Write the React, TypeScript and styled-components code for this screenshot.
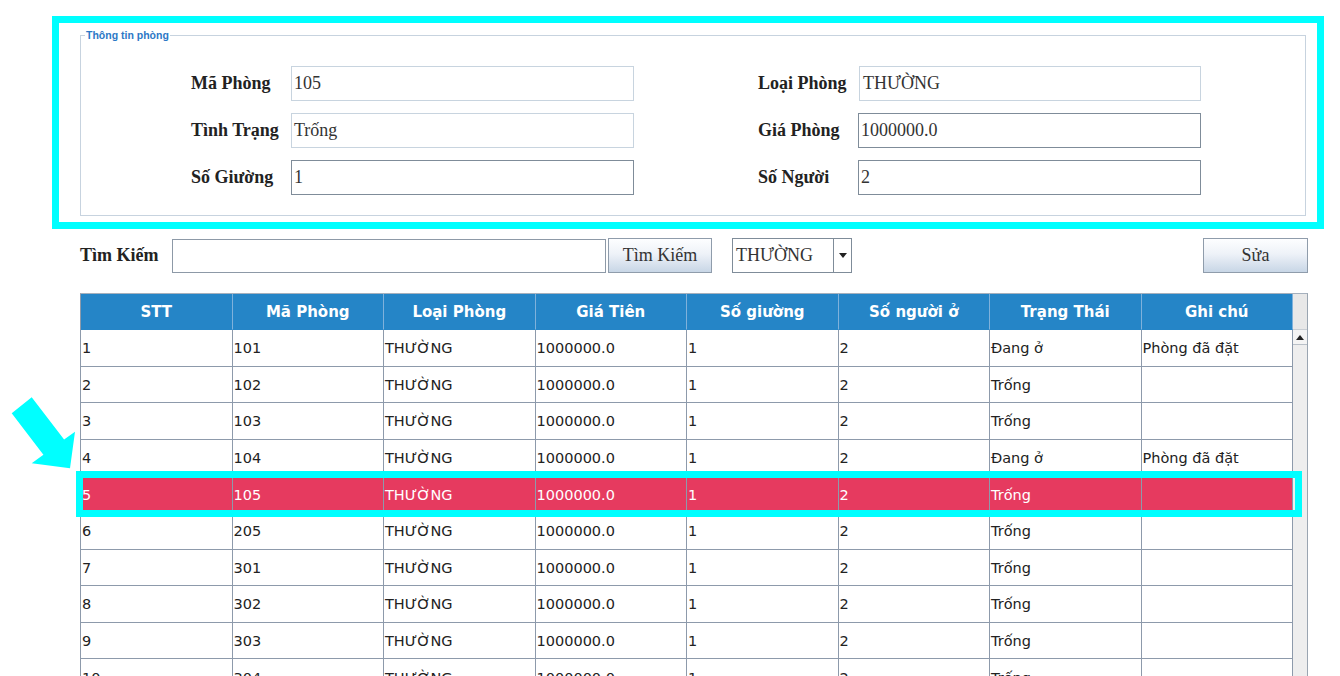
import React from "react";
import styled, { createGlobalStyle } from "styled-components";

const Global = createGlobalStyle`
  html, body { margin: 0; padding: 0; background: #ffffff; overflow: hidden; height: 676px; }
  * { box-sizing: border-box; }
`;

const Page = styled.div`
  position: relative;
  width: 1340px;
  height: 676px;
  overflow: hidden;
  padding: 16px 0 0 52px;
  font-family: "Liberation Serif", serif;
`;

const InfoFrame = styled.div`
  width: 1272px;
  height: 213px;
  border: 7px solid #00ffff;
  padding: 6px 11px 0 21px;
`;

const FieldSet = styled.fieldset`
  margin: 0;
  padding: 0 0 20px 0;
  border: 1px solid #c7d3df;
  height: 187px;
`;

const Legend = styled.legend`
  margin-left: 4px;
  padding: 0 1px;
  font-family: "Liberation Sans", Arial, sans-serif;
  font-size: 10.5px;
  line-height: 12px;
  color: #2c78c6;
  font-weight: 600;
`;

const FormGrid = styled.div`
  display: grid;
  grid-template-columns: 100px 343px 124px 100px 343px;
  grid-auto-rows: 35px;
  row-gap: 12px;
  padding: 25px 0 0 110px;
  align-items: center;
`;

const Label = styled.div`
  font-family: "Liberation Serif", serif;
  font-weight: bold;
  font-size: 18px;
  color: #222222;
  white-space: nowrap;
`;

const Field = styled.div<{ $editable?: boolean; $shift?: boolean }>`
  height: 35px;
  margin-left: ${(p) => (p.$shift ? "1px" : "0")};
  border: 1px solid ${(p) => (p.$editable ? "#7f8c99" : "#c8d4df")};
  background: #ffffff;
  font-family: "Liberation Serif", serif;
  font-size: 18px;
  color: #333333;
  display: flex;
  align-items: center;
  padding-left: ${(p) => (p.$shift ? "3px" : "2px")};
`;

const Spacer = styled.div``;

const SearchRow = styled.div`
  display: flex;
  align-items: center;
  margin: 9px 0 0 28px;
  width: 1228px;
  height: 35px;
`;

const SearchLabel = styled(Label)`
  width: 92px;
`;

const SearchInput = styled.div`
  width: 434px;
  height: 34px;
  border: 1px solid #8d99a7;
  background: #fff;
`;

const Button = styled.div<{ $w: number; $left?: number }>`
  width: ${(p) => p.$w}px;
  height: 35px;
  margin-left: ${(p) => p.$left ?? 0}px;
  border: 1px solid #8f9cab;
  background: linear-gradient(#fdfeff 0%, #eef2f8 45%, #c8d6e6 100%);
  display: flex;
  align-items: center;
  justify-content: center;
  font-family: "Liberation Serif", serif;
  font-size: 18px;
  color: #333333;
`;

const PushRight = styled.div`
  flex: 1;
`;

const Combo = styled.div`
  width: 120px;
  height: 35px;
  margin-left: 20px;
  border: 1px solid #7f8c99;
  background: #fff;
  display: flex;
`;

const ComboText = styled.div`
  flex: 1;
  display: flex;
  align-items: center;
  padding-left: 3px;
  font-family: "Liberation Serif", serif;
  font-size: 18px;
  color: #333;
`;

const ComboArrow = styled.div`
  width: 18px;
  border-left: 1px solid #7f8c99;
  display: flex;
  align-items: center;
  justify-content: center;
  &::after {
    content: "";
    border-left: 4px solid transparent;
    border-right: 4px solid transparent;
    border-top: 5px solid #222;
  }
`;

const TableWrap = styled.div`
  position: relative;
  margin: 20px 0 0 28px;
  width: 1228px;
  display: flex;
`;

const Table = styled.div`
  width: 1213px;
  border-left: 1px solid #8d9aab;
  border-top: 1px solid #a5b0bd;
`;

const Row = styled.div<{ $header?: boolean; $selected?: boolean }>`
  display: grid;
  grid-template-columns: repeat(8, 1fr);
  height: ${(p) => (p.$header ? "36px" : "36.6px")};
  background: ${(p) => (p.$header ? "#2585c7" : p.$selected ? "#e63a5f" : "#ffffff")};
`;

const Cell = styled.div<{ $header?: boolean; $selected?: boolean }>`
  border-right: 1px solid ${(p) => (p.$header ? "#7fb1db" : "#8d9aab")};
  border-bottom: 1px solid ${(p) => (p.$header ? "#2585c7" : "#8d9aab")};
  display: flex;
  align-items: center;
  justify-content: ${(p) => (p.$header ? "center" : "flex-start")};
  padding-left: ${(p) => (p.$header ? "0" : "1px")};
  padding-top: 1px;
  font-family: "DejaVu Sans", Verdana, sans-serif;
  font-size: ${(p) => (p.$header ? "15px" : "14.5px")};
  font-weight: ${(p) => (p.$header ? "bold" : "normal")};
  color: ${(p) => (p.$header || p.$selected ? "#ffffff" : "#222222")};
  white-space: nowrap;
  overflow: hidden;
`;

const ScrollBar = styled.div`
  width: 15px;
  display: flex;
  flex-direction: column;
  border-right: 1px solid #9aa5b1;
  border-top: 1px solid #a5b0bd;
  background: #eeeeee;
  height: 400px;
`;

const ScrollHead = styled.div`
  height: 36px;
  background: #e8e8e8;
  border-bottom: 1px solid #c9ced4;
`;

const ScrollUp = styled.div`
  height: 15px;
  background: #f4f4f4;
  border-bottom: 1px solid #b9c0c8;
  display: flex;
  align-items: center;
  justify-content: center;
  &::after {
    content: "";
    border-left: 4px solid transparent;
    border-right: 4px solid transparent;
    border-bottom: 5px solid #222;
  }
`;

const RowHighlight = styled.div`
  position: absolute;
  left: -4px;
  top: 178px;
  width: 1226px;
  height: 46px;
  border: 7px solid #00ffff;
  pointer-events: none;
`;

const Arrow = styled.svg`
  position: absolute;
  left: 0;
  top: 380px;
`;

const headers = ["STT", "Mã Phòng", "Loại Phòng", "Giá Tiên", "Số giường", "Số người ở", "Trạng Thái", "Ghi chú"];

const rooms: { id: string; status: string; note: string }[] = [
  { id: "101", status: "Đang ở", note: "Phòng đã đặt" },
  { id: "102", status: "Trống", note: "" },
  { id: "103", status: "Trống", note: "" },
  { id: "104", status: "Đang ở", note: "Phòng đã đặt" },
  { id: "105", status: "Trống", note: "" },
  { id: "205", status: "Trống", note: "" },
  { id: "301", status: "Trống", note: "" },
  { id: "302", status: "Trống", note: "" },
  { id: "303", status: "Trống", note: "" },
  { id: "304", status: "Trống", note: "" },
];

export default function App() {
  return (
    <Page>
      <Global />
      <InfoFrame>
        <FieldSet>
          <Legend>Thông tin phòng</Legend>
          <FormGrid>
            <Label>Mã Phòng</Label>
            <Field>105</Field>
            <Spacer />
            <Label>Loại Phòng</Label>
            <Field $shift>THƯỜNG</Field>

            <Label>Tình Trạng</Label>
            <Field>Trống</Field>
            <Spacer />
            <Label>Giá Phòng</Label>
            <Field $editable>1000000.0</Field>

            <Label>Số Giường</Label>
            <Field $editable>1</Field>
            <Spacer />
            <Label>Số Người</Label>
            <Field $editable>2</Field>
          </FormGrid>
        </FieldSet>
      </InfoFrame>

      <SearchRow>
        <SearchLabel>Tìm Kiếm</SearchLabel>
        <SearchInput />
        <Button $w={104} $left={2}>Tìm Kiếm</Button>
        <Combo>
          <ComboText>THƯỜNG</ComboText>
          <ComboArrow />
        </Combo>
        <PushRight />
        <Button $w={105}>Sửa</Button>
      </SearchRow>

      <TableWrap>
        <Table>
          <Row $header>
            {headers.map((h) => (
              <Cell $header key={h}>{h}</Cell>
            ))}
          </Row>
          {rooms.map((r, i) => {
            const sel = r.id === "105";
            const vals = [String(i + 1), r.id, "THƯỜNG", "1000000.0", "1", "2", r.status, r.note];
            return (
              <Row key={r.id} $selected={sel}>
                {vals.map((v, j) => (
                  <Cell key={j} $selected={sel}>{v}</Cell>
                ))}
              </Row>
            );
          })}
        </Table>
        <ScrollBar>
          <ScrollHead />
          <ScrollUp />
        </ScrollBar>
        <RowHighlight />
      </TableWrap>

      <Arrow width="90" height="100" viewBox="0 0 90 100">
        <polygon
          points="11.7,33.3 43.4,74.7 31.7,83.3 70,88.3 75,51.7 64.1,59.6 31.7,17.3"
          fill="#00ffff"
        />
      </Arrow>
    </Page>
  );
}
